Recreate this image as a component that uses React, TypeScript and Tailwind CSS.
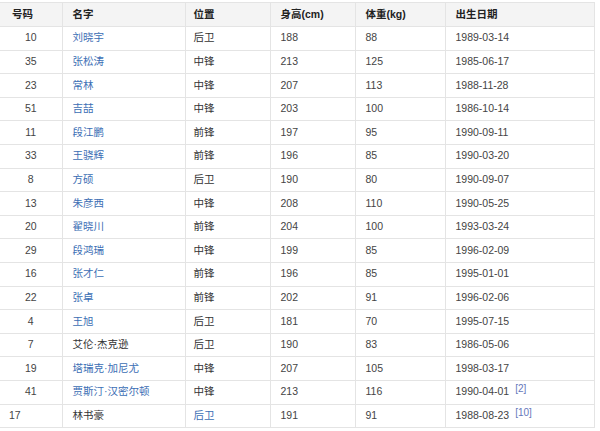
const players: {
  no: string
  name: string
  nameLink: boolean
  pos: string
  posLink?: boolean
  h: string
  w: string
  born: string
  ref?: string
  left?: boolean
}[] = [
  { no: '10', name: '刘晓宇', nameLink: true, pos: '后卫', h: '188', w: '88', born: '1989-03-14' },
  { no: '35', name: '张松涛', nameLink: true, pos: '中锋', h: '213', w: '125', born: '1985-06-17' },
  { no: '23', name: '常林', nameLink: true, pos: '中锋', h: '207', w: '113', born: '1988-11-28' },
  { no: '51', name: '吉喆', nameLink: true, pos: '中锋', h: '203', w: '100', born: '1986-10-14' },
  { no: '11', name: '段江鹏', nameLink: true, pos: '前锋', h: '197', w: '95', born: '1990-09-11' },
  { no: '33', name: '王骁辉', nameLink: true, pos: '前锋', h: '196', w: '85', born: '1990-03-20' },
  { no: '8', name: '方硕', nameLink: true, pos: '后卫', h: '190', w: '80', born: '1990-09-07' },
  { no: '13', name: '朱彦西', nameLink: true, pos: '中锋', h: '208', w: '110', born: '1990-05-25' },
  { no: '20', name: '翟晓川', nameLink: true, pos: '前锋', h: '204', w: '100', born: '1993-03-24' },
  { no: '29', name: '段鸿瑞', nameLink: true, pos: '中锋', h: '199', w: '85', born: '1996-02-09' },
  { no: '16', name: '张才仁', nameLink: true, pos: '前锋', h: '196', w: '85', born: '1995-01-01' },
  { no: '22', name: '张卓', nameLink: true, pos: '前锋', h: '202', w: '91', born: '1996-02-06' },
  { no: '4', name: '王旭', nameLink: true, pos: '后卫', h: '181', w: '70', born: '1995-07-15' },
  { no: '7', name: '艾伦·杰克逊', nameLink: false, pos: '后卫', h: '190', w: '83', born: '1986-05-06' },
  { no: '19', name: '塔瑞克·加尼尤', nameLink: true, pos: '中锋', h: '207', w: '105', born: '1998-03-17' },
  { no: '41', name: '贾斯汀·汉密尔顿', nameLink: true, pos: '中锋', h: '213', w: '116', born: '1990-04-01', ref: '[2]' },
  { no: '17', name: '林书豪', nameLink: false, pos: '后卫', posLink: true, h: '191', w: '91', born: '1988-08-23', ref: '[10]', left: true },
]

const font = { fontFamily: '"Liberation Sans", "Noto Sans CJK SC", sans-serif' }

export default function App() {
  return (
    <div className="w-[600px] h-[431px] bg-white pt-[2px] overflow-hidden" style={font}>
      <table className="w-[594px] border-collapse table-fixed text-[10.5px] text-[#333]">
        <colgroup>
          <col className="w-[62px]" />
          <col className="w-[123px]" />
          <col className="w-[85px]" />
          <col className="w-[85px]" />
          <col className="w-[90px]" />
          <col className="w-[149px]" />
        </colgroup>
        <thead>
          <tr className="h-[24px] bg-[#f4f4f4] font-bold text-[#222]">
            <th className="border border-[#e4e4e4] border-l-0 text-left pl-[12px]">号码</th>
            <th className="border border-[#e4e4e4] text-left pl-[10px]">名字</th>
            <th className="border border-[#e4e4e4] text-left pl-[8px]">位置</th>
            <th className="border border-[#e4e4e4] text-left pl-[10px]">身高(cm)</th>
            <th className="border border-[#e4e4e4] text-left pl-[10px]">体重(kg)</th>
            <th className="border border-[#e4e4e4] text-left pl-[10px]">出生日期</th>
          </tr>
        </thead>
        <tbody>
          {players.map((p) => (
            <tr key={p.no} className="h-[23.6px]">
              <td
                className={
                  p.left
                    ? 'border border-[#e4e4e4] border-l-0 text-left pl-[9px] text-[#444]'
                    : 'border border-[#e4e4e4] border-l-0 text-center text-[#444]'
                }
              >
                {p.no}
              </td>
              <td className="border border-[#e4e4e4] pl-[10px]">
                <span className={p.nameLink ? 'text-[#3b6eb4]' : 'text-[#333]'}>{p.name}</span>
              </td>
              <td className="border border-[#e4e4e4] pl-[8px]">
                <span className={p.posLink ? 'text-[#3b6eb4]' : 'text-[#333]'}>{p.pos}</span>
              </td>
              <td className="border border-[#e4e4e4] pl-[10px] text-[#444]">{p.h}</td>
              <td className="border border-[#e4e4e4] pl-[10px] text-[#444]">{p.w}</td>
              <td className="border border-[#e4e4e4] pl-[10px] text-[#444]">
                {p.born}
                {p.ref && (
                  <sup className="ml-[6px] text-[10px] text-[#6677bb] relative top-[-3px]">{p.ref}</sup>
                )}
              </td>
            </tr>
          ))}
        </tbody>
      </table>
    </div>
  )
}
